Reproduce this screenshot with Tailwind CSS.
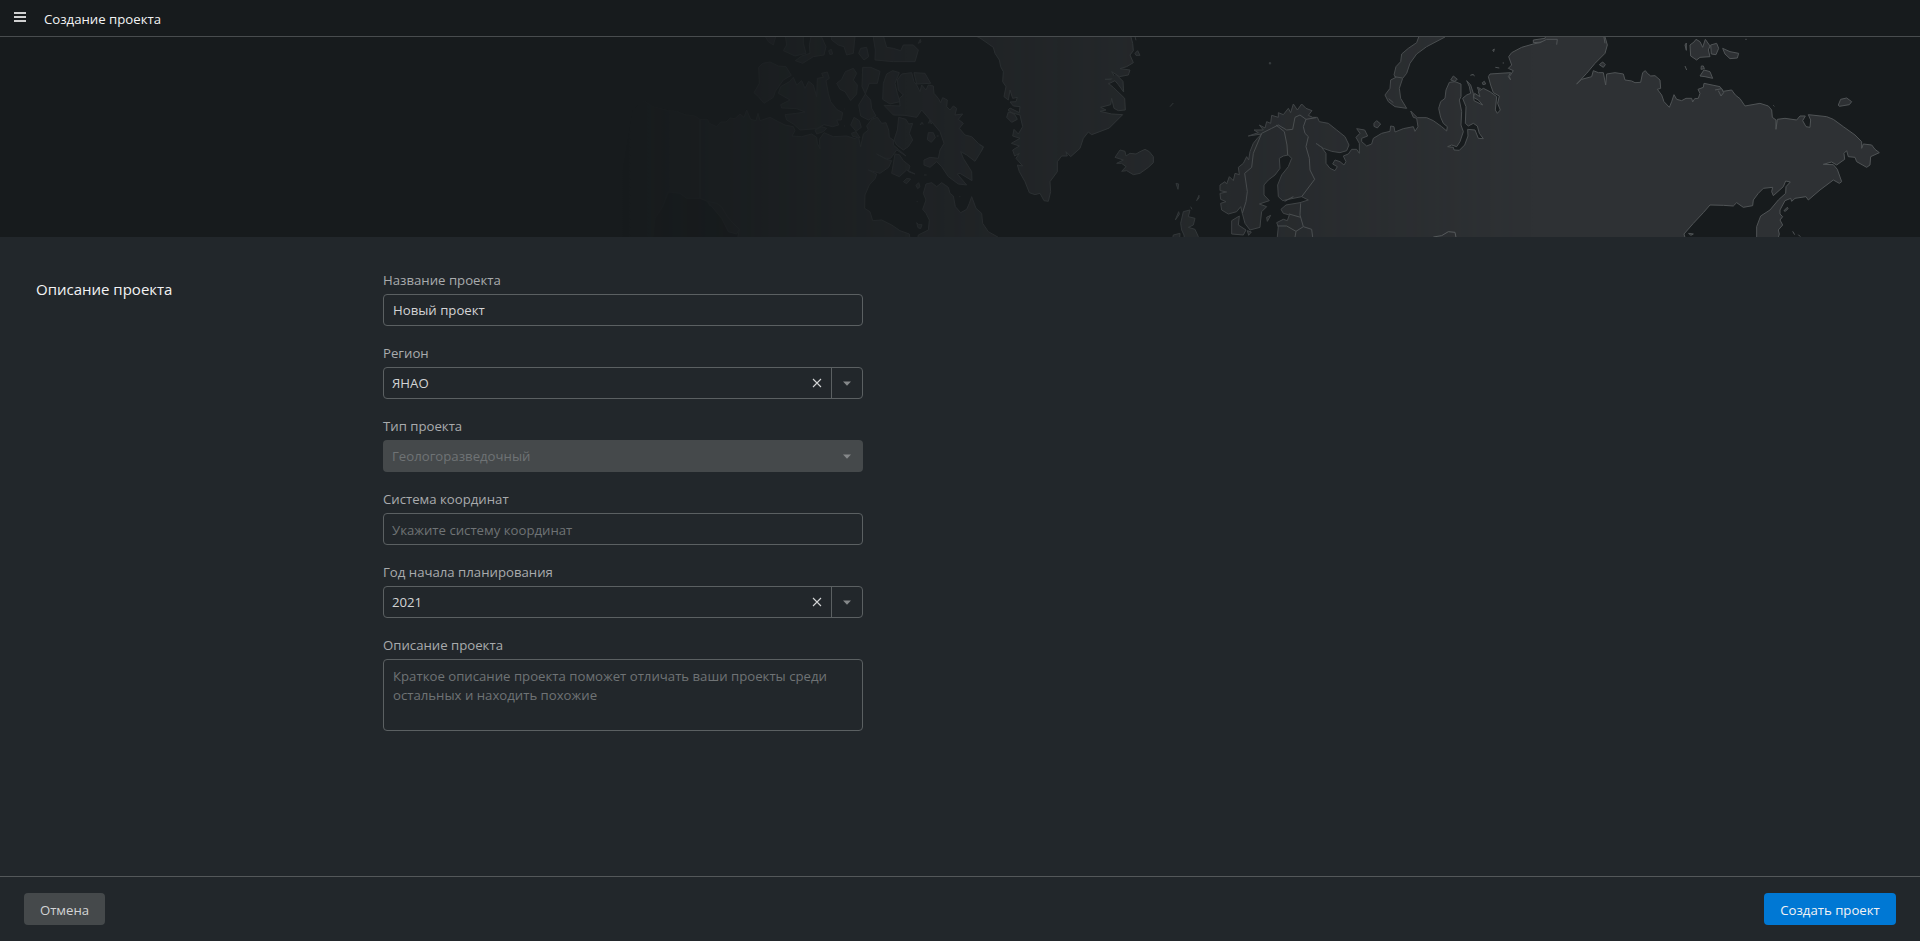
<!DOCTYPE html>
<html lang="ru">
<head>
<meta charset="utf-8">
<title>Создание проекта</title>
<script src="https://cdn.jsdelivr.net/npm/@tailwindcss/browser@4"></script>
</head>
<body class="flex h-screen flex-col overflow-hidden bg-[#22272b] font-['Open_Sans','Noto_Sans',sans-serif] text-[13.2px] leading-5 text-[#d3d4d5]">
<header class="flex h-[37px] shrink-0 items-center border-b border-[#484c4e] bg-[#171b1d] pl-[14px]">
  <svg class="mb-[3px] h-[10px] w-3 fill-[#d0d1d2]" viewBox="0 0 12 10"><path d="M0 0h12v2H0zM0 4h12v2H0zM0 8h12v2H0z"/></svg>
  <h1 class="ml-[18px] pt-[2px] text-[#f3f3f4]">Создание проекта</h1>
</header>
<div class="h-[200px] shrink-0 bg-[#171b1d]">
<svg class="block h-[200px] w-full" viewBox="0 37 1920 200" stroke-linejoin="round">
  <defs>
    <linearGradient id="fade" gradientUnits="userSpaceOnUse" x1="620" y1="0" x2="1540" y2="0"><stop offset="0" stop-color="#fff" stop-opacity="0"/><stop offset=".1" stop-color="#fff" stop-opacity=".1"/><stop offset="0.45" stop-color="#fff" stop-opacity=".46"/><stop offset="1" stop-color="#fff"/></linearGradient>
    <mask id="m" maskUnits="userSpaceOnUse" x="600" y="37" width="1320" height="200"><rect x="600" y="37" width="1320" height="200" fill="url(#fade)"/></mask>
  </defs>
  <g mask="url(#m)" fill="#2e3134" stroke="#505456" stroke-width="3">
    <!-- North America -->
    <g transform="translate(620 30) scale(.33333)" stroke="#404447">
      <path d="M-30 640L40 240 72 212 100 230 145 242 170 244 195 254 225 258 240 268 262 268 268 280 290 290 302 276 318 276 330 264 345 266 360 252 372 262 380 240 392 268 408 272 414 250 420 272 450 262 475 275 495 285 520 290 525 302 516 318 545 320 575 312 590 322 592 340 600 356 598 328 612 308 640 320 680 318 705 326 715 318 722 350 730 312 745 300 740 288 755 268 772 262 785 280 798 278 806 300 808 322 820 330 820 345 835 358 858 378 830 360 812 385 795 385 770 372 800 388 815 392 806 412 780 430 745 420 770 432 766 445 748 465 735 495 734 535 750 545 758 572 785 570 815 585 840 602 868 612 872 640Z"/>
      <path d="M890 640L895 615 925 600 928 570 918 550 908 538 918 510 910 490 918 462 935 458 950 470 965 458 985 472 990 490 1000 498 1006 530 1022 548 1040 538 1048 520 1055 500 1068 535 1085 550 1088 580 1105 605 1135 622 1140 640Z"/>
      <path d="M402 188L418 160 416 112 428 100 450 96 475 108 498 110 514 136 490 150 466 184 460 202 432 220 415 200Z"/>
      <path d="M475 190L482 170 508 155 520 142 530 165 545 152 555 175 566 154 580 165 590 200 592 145 610 142 605 130 622 126 628 145 618 152 625 190 632 215 650 238 668 248 664 270 650 270 656 285 638 290 612 284 590 296 540 300 520 282 500 270 495 254 530 250 555 246 530 236 485 234 482 224 510 210Z"/>
      <path d="M650 160L665 148 676 125 700 115 710 130 700 150 712 165 710 192 692 212 675 185 660 178ZM728 112L752 112 780 124 772 160 748 160 736 192 726 170ZM736 192L752 210 755 235 768 258 745 270 722 258 716 225ZM790 160L800 132 818 122 838 128 825 160 832 190 840 215 810 222 788 208Z"/>
      <path d="M832 150L845 132 875 128 882 155 890 165 900 185 905 165 918 180 925 165 940 168 942 190 955 205 962 218 968 203 982 210 980 230 990 240 1000 228 1010 235 1005 255 1028 252 1015 268 1030 280 1018 295 1035 315 1055 320 1075 340 1090 352 1080 370 1065 394 1040 375 1022 365 1030 385 1055 425 1056 452 1020 430 1012 432 1040 465 1015 462 985 440 965 410 950 395 930 412 912 405 912 390 930 382 955 385 960 360 972 340 960 305 935 275 905 240 890 262 855 256 820 255 792 226 840 228 838 205 850 195 835 180Z"/>
      <path d="M882 128L915 130 932 160 890 162ZM836 262L858 268 866 282 878 280 868 310 878 330 865 350 850 360 830 345 822 330 832 300ZM815 430L825 372 838 374 850 392 870 408 865 425 885 432 860 420 838 440ZM925 308l15 0 6 15-12 14-12-8ZM850 455l10-10 12 2-12 14ZM888 466l8-8 4 12-7 6Z"/>
      <path d="M692 285L702 262 718 272 724 292 708 304ZM585 300L605 290 620 295 610 305 590 312ZM694 310l14-5 12 18-22-4ZM890 578l6 6 10 0-4 12-8-3ZM900 285l6-8 4 6M925 280l5-10 5 12M950 318h6M912 435h8M672 237h2M672 288h3M1018 500h3M890 515h3"/>
      <path d="M490 62L500 45 495 10 550 10 550 40 558 70 525 78ZM526 92L545 78 570 70 568 45 575 10 600 10 618 50 612 75 580 80 548 100ZM430 10L445 35 460 45 470 10ZM632 10L635 30 655 45 672 50 680 75 700 70 706 10ZM716 70L722 55 740 52 746 80 732 90ZM626 62l8-4 4 14-8 2ZM758 10L766 60 765 90 820 95 885 95 895 60 880 45 850 45 842 62 820 55 800 52 788 10ZM895 40l6-12 2 8Z"/>
      <path d="M96 640L105 565 128 530 145 486 180 490 200 505 240 505 262 514 270 528 290 520 304 530 322 560 336 576 358 598 350 640Z" fill="#171b1d"/>
      <path d="M262 514L290 520 304 530 322 560 336 576 358 598 350 612 325 605 305 565 284 540Z"/>
      <path d="M240 268V505" stroke-width="5" fill="none"/>
    </g>
    <!-- Greenland, Iceland, British Isles -->
    <g transform="translate(980 30) scale(.33333)" stroke="#44494b">
      <path d="M-20 15L0 24 40 52 45 70 58 90 62 110 70 125 68 155 78 170 72 200 85 210 90 180 98 205 112 202 108 215 90 216 100 228 120 230 118 248 90 234 84 240 105 255 112 268 95 277 80 262 85 246 120 255 128 290 115 312 102 298 98 318 120 325 94 340 118 348 98 360 104 378 118 370 108 385 128 408 112 405 118 425 135 455 148 488 165 494 180 490 192 512 205 514 212 485 210 455 232 425 232 395 245 378 262 378 258 365 272 380 300 355 310 325 325 306 335 314 388 294 428 254 395 252 360 244 378 240 362 232 392 224 395 205 402 235 415 242 436 240 434 205 400 172 385 160 405 150 375 148 408 146 395 125 418 140 445 135 450 120 420 116 440 110 460 98 450 75 460 62 458 40 450 10Z"/>
      <path d="M385 162l20-10 10 12 16 22-2-32-22-22M405 382L420 360 435 364 438 378 450 370 468 372 480 365 495 358 508 365 520 380 520 398 505 412 480 430 460 434 440 422 425 424 438 410 425 400 410 400 430 390ZM465 70l8-8 7 14-12 0ZM464 15l4 16M570 230l10-11M588 460l8 2-2 16ZM650 512l7-16 0 8ZM868 98h4v4h-4ZM0 345l10 5-6 14"/>
      <path d="M575 640L580 615 600 610 598 640ZM602 580L610 545 630 540 625 560 645 565 640 585 625 592 645 598 655 620 650 640 615 640 612 615 605 600ZM586 570l10-25 2 8ZM632 530l4 8"/>
    </g>
    <!-- Eurasia -->
    <g transform="translate(1200 30) scale(.33333)">
      <path d="M60 465L75 455 80 462 88 440 100 452 105 430 118 434 115 412 130 400 140 380 146 390 150 365 160 340 172 325 185 312 145 318 175 308 162 300 190 300 178 285 195 294 200 275 212 280 215 256 235 262 235 248 250 254 265 235 272 248 280 222 292 240 305 222 318 235 336 242 325 256 338 262 352 262 358 275 385 280 410 300 435 320 447 345 440 362 420 368 395 364 370 355 348 340 365 352 378 370 378 400 390 415 405 422 412 410 398 402 405 390 420 395 432 405 438 395 430 378 445 372 455 358 470 358 478 370 478 340 468 322 480 310 470 296 494 300 503 318 485 325 485 335 500 348 515 342 520 325 545 310 570 304 572 288 582 290 585 306 610 296 640 290 645 304 654 290 650 265 640 262 632 243 652 263 680 263 700 272 725 290 740 303 742 290 730 280 722 262 716 235 722 215 735 205 738 180 748 157 765 155 783 162 783 200 778 210 785 245 783 285 790 305 780 335 770 350 755 345 743 350 760 352 762 360 778 361 794 345 804 318 803 298 825 300 835 325 850 326 838 310 832 288 820 280 805 288 796 280 798 230 788 205 800 195 812 190 808 170 800 152 812 165 820 190 822 212 848 225 835 210 820 202 824 190 840 200 835 185 850 175 870 185 890 200 886 240 892 250 901 240 893 220 898 198 880 188 872 165 865 140 870 132 900 130 932 128 925 140 932 150 928 140 940 122 925 115 935 105 926 80 935 68 965 52 1000 42 1030 36 1000 38 1000 30 1035 25 1040 10
      1212 10 1222 45 1215 70 1185 100 1160 130 1130 162 1145 148 1175 140 1180 122 1195 128 1210 128 1217 165 1220 132 1245 128 1270 132 1275 150 1295 153 1305 158 1322 157 1328 128 1336 122 1342 130 1352 138 1365 137 1380 150 1382 175 1372 178 1385 195 1392 215 1408 232 1415 215 1422 194 1430 208 1445 212 1458 205 1475 205 1478 216 1484 206 1495 205 1500 190 1494 178 1510 172 1512 160 1560 170 1570 184 1595 180 1606 195 1620 206 1635 228 1680 220 1705 228 1715 240 1717 262 1728 270 1728 298 1732 268 1755 265 1790 270 1800 258 1816 258 1808 272 1818 290 1830 292 1832 270 1825 254 1880 260 1900 268 1930 290 1965 315 1985 335 1985 355 1990 342 2015 345 2025 358 2038 368 2012 380 2010 405 2000 412 1970 395 1965 382 1945 380 1940 362 1932 370 1934 388 1910 405 1895 396 1870 403 1900 404 1912 418 1925 455 1918 460 1900 450 1860 480 1825 510 1818 500 1785 505 1775 514 1772 505 1755 512 1740 540 1740 552 1748 560 1740 570 1748 585 1735 600 1738 612 1730 640 1670 640 1670 590 1682 558 1710 540 1735 510 1757 490 1758 470 1771 456 1757 453 1750 470 1720 497 1715 485 1718 472 1690 475 1675 490 1660 510 1658 527 1630 532 1610 518 1600 528 1570 526 1530 525 1510 548 1480 580 1452 612 1460 640
      230 640 235 590 230 578 250 568 262 572 268 555 250 550 243 538 258 525 300 518 325 510 305 500 265 508 248 512 235 500 233 465 245 435 265 410 275 385 265 375 250 378 238 385 240 415 225 435 205 450 192 465 192 495 208 512 178 522 200 530 185 545 182 570 180 592 150 600 135 580 127 550 122 530 110 545 85 552 65 540 62 520 78 515 62 508 60 490 80 486 60 482Z"/>
      <path d="M280 500L254 514M127 550L138 515 142 485 134 430 155 412 160 370 185 310 215 295 235 285 260 300 278 298 285 262 300 255 318 268 310 290 315 310 325 320 318 350 328 385 330 420 344 448 305 500M228 285l25 20 8 40 2 30M318 268l30-5M302 520l-2 35 10 35 25 8 5 40M302 562l-35-10M310 590l-22 14-28-16-28 0M288 604l-5 30M700 621l25-4 20-12 20 2 4 20" fill="none" stroke="#5d6163"/>
      <path d="M660 10L650 38 625 55 605 72 602 95 588 110 582 135 588 142 572 150 570 175 555 195 565 215 585 230 620 235 602 205 598 175 608 145 620 130 630 100 650 72 680 50 735 21 745 10ZM583 140l24 4M566 206l14 12"/>
      <path d="M752 150l8-12 12 10-8 6ZM522 280l8-8 12 10-10 12-10-5ZM811 136l8-3 5 5M847 158l6-4 4 8-8 2ZM832 172l10 4-6 6ZM878 60l5-3-2 8ZM886 112l12 2M908 99h4M208 99h3M95 572L118 558 115 585 138 600 130 615 95 612ZM142 602l12 4-8 10ZM200 562l12-6-10 18Z"/>
      <path d="M1198 104l10-8 8 8-6 8ZM1455 45l4-6 0 22ZM1470 45L1482 36 1488 28 1500 35 1508 52 1516 28 1530 48 1525 60 1530 80 1500 82 1490 90 1472 78ZM1532 45L1550 40 1556 55 1548 74 1534 72ZM1568 55L1590 65 1616 70 1612 84 1590 86 1575 72ZM1455 108l5 12M1504 108l6 0 3 8-10 2ZM1500 138L1512 120 1530 125 1538 145 1515 140ZM1915 225L1922 208 1940 204 1955 215 1948 224 1918 229ZM1636 28h4M1720 226l3 3M1752 542l10-10 2 4-8 8ZM1778 604l6 10M1795 614l6 6M1466 610l14 2-8 4ZM1545 180l20-4 6 12-8 10-8-16M1210 10l5 30M1020 38l20-10 32 0-2 16"/>
    </g>
  </g>
</svg>
</div>
<main class="flex flex-1 pl-9">
  <h2 class="w-[347px] shrink-0 pt-[40px] text-[15px] leading-6 text-[#f3f3f4]">Описание проекта</h2>
  <form class="w-[480px] pt-[33px] text-[#a9abad]">
    <div class="mb-[17px] h-14"><label class="block h-6">Название проекта</label><div class="flex h-8 items-center rounded border border-[#5b6062] pl-[9px] text-[#d3d4d5]">Новый проект</div></div>
    <div class="mb-[17px] h-14"><label class="block h-6">Регион</label><div class="flex h-8 items-center rounded border border-[#5b6062] pl-2 text-[#d3d4d5]"><span class="grow">ЯНАО</span>
      <svg class="mr-[9px] h-[10px] w-[10px] stroke-[#d3d4d5]" viewBox="0 0 10 10"><path d="M1 1l8 8M9 1L1 9" stroke-width="1.1"/></svg><div class="flex h-full w-[31px] items-center justify-center border-l border-[#5b6062]"><svg class="h-[5px] w-2 fill-[#85888a]" viewBox="0 0 8 5"><path d="M0 .5h8L4 4.8z"/></svg></div></div></div>
    <div class="mb-[17px] h-14"><label class="block h-6">Тип проекта</label><div class="flex h-8 items-center rounded bg-[#45494b] pr-3 pl-[9px] text-[#6f7375]"><span class="grow">Геологоразведочный</span><svg class="h-[5px] w-2 fill-[#85888a]" viewBox="0 0 8 5"><path d="M0 .5h8L4 4.8z"/></svg></div></div>
    <div class="mb-[17px] h-14"><label class="block h-6">Система координат</label><div class="flex h-8 items-center rounded border border-[#5b6062] pt-[2px] pl-2 text-[#6f7375]">Укажите систему координат</div></div>
    <div class="mb-[17px] h-14"><label class="block h-6">Год начала планирования</label><div class="flex h-8 items-center rounded border border-[#5b6062] pl-2 text-[#d3d4d5]"><span class="grow">2021</span>
      <svg class="mr-[9px] h-[10px] w-[10px] stroke-[#d3d4d5]" viewBox="0 0 10 10"><path d="M1 1l8 8M9 1L1 9" stroke-width="1.1"/></svg><div class="flex h-full w-[31px] items-center justify-center border-l border-[#5b6062]"><svg class="h-[5px] w-2 fill-[#85888a]" viewBox="0 0 8 5"><path d="M0 .5h8L4 4.8z"/></svg></div></div></div>
    <div><label class="block h-6">Описание проекта</label><div class="h-[72px] rounded border border-[#5b6062] pt-[7px] pl-[9px] leading-[19px] whitespace-nowrap text-[#6f7375]">Краткое описание проекта поможет отличать ваши проекты среди<br>остальных и находить похожие</div></div>
  </form>
</main>
<footer class="flex h-[65px] shrink-0 items-start justify-between border-t border-[#54585a] px-6 pt-4">
  <button class="h-8 w-[81px] rounded bg-[#45494b] pt-[2px] text-[#d3d4d5]">Отмена</button>
  <button class="h-8 w-[132px] rounded bg-[#0078d4] pt-[2px] text-[#f3f3f4]">Создать проект</button>
</footer>
</body>
</html>
